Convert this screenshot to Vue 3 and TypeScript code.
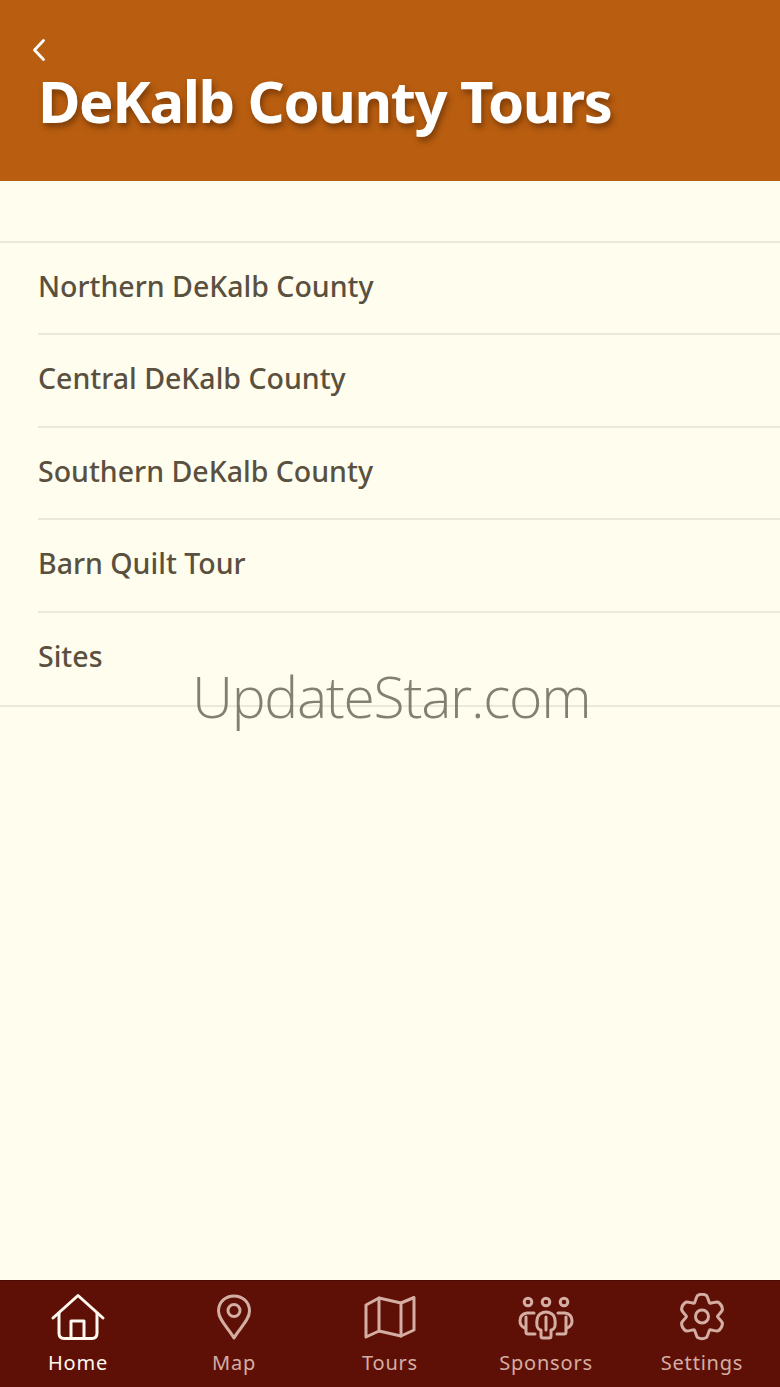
<script setup lang="ts">
interface Tab {
  label: string
  active?: boolean
}

const items = [
  'Northern DeKalb County',
  'Central DeKalb County',
  'Southern DeKalb County',
  'Barn Quilt Tour',
  'Sites'
]

const tabs: Tab[] = [
  { label: 'Home', active: true },
  { label: 'Map' },
  { label: 'Tours' },
  { label: 'Sponsors' },
  { label: 'Settings' }
]

// six rounded lobes round the centre of the settings icon
function gearPoint(deg: number, r: number) {
  const a = (deg * Math.PI) / 180
  return `${(28 + r * Math.cos(a)).toFixed(2)} ${(23.5 + r * Math.sin(a)).toFixed(2)}`
}

const gearPath = (() => {
  let d = `M${gearPoint(-120, 15.5)}`
  for (let i = 0; i < 6; i++) {
    const a = -90 + i * 60
    d += ` C${gearPoint(a - 24, 16)} ${gearPoint(a - 18, 20)} ${gearPoint(a - 12, 21.5)}`
    d += ` Q${gearPoint(a, 23.5)} ${gearPoint(a + 12, 21.5)}`
    d += ` C${gearPoint(a + 18, 20)} ${gearPoint(a + 24, 16)} ${gearPoint(a + 30, 15.5)}`
  }
  return d + ' Z'
})()
</script>

<template>
  <div class="screen">
    <header class="header">
      <svg class="back" width="16" height="24" viewBox="0 0 16 24" fill="none">
        <path d="M12.5 2.5 L3.500 12 L12.5 21.5" stroke="#fff" stroke-width="2.8" stroke-linecap="round" stroke-linejoin="round" />
      </svg>
      <h1 class="title">DeKalb County Tours</h1>
    </header>

    <main class="content">
      <ul class="list">
        <li v-for="item in items" :key="item" class="row">
          <span class="row-text">{{ item }}</span>
        </li>
      </ul>
      <div class="watermark">UpdateStar.com</div>
    </main>

    <nav class="tabbar">
      <div v-for="tab in tabs" :key="tab.label" class="tab" :class="{ active: tab.active }">
        <svg class="tab-icon" width="56" height="52" viewBox="0 0 56 52" fill="none" stroke="currentColor" stroke-width="3" stroke-linecap="round" stroke-linejoin="round">
          <template v-if="tab.label === 'Home'">
            <path d="M3 25 L28 2.500 L53 25" />
            <path d="M9 20 V40 Q9 45.500 14 45.500 H42 Q47 45.500 47 40 V20" />
            <path d="M21 45.500 V28 H34 V45.500" />
          </template>
          <template v-else-if="tab.label === 'Map'">
            <path d="M28 45 C23 36 12.500 27 12.500 18 C12.500 8.500 20 3 28 3 C36 3 43.500 8.500 43.500 18 C43.500 27 33 36 28 45 Z" />
            <circle cx="28" cy="17.500" r="6" />
          </template>
          <template v-else-if="tab.label === 'Tours'">
            <path d="M4 12 L17 5 L39 10 L52 4.500 V37 L39 43 L17 38 L4 44 Z" />
            <path d="M17 5 V38" />
            <path d="M39 10 V43" />
          </template>
          <template v-else-if="tab.label === 'Sponsors'">
            <circle cx="10" cy="9" r="3.800" />
            <circle cx="28" cy="9" r="3.800" />
            <circle cx="46" cy="9" r="3.800" />
            <path d="M22 21 Q28 17 34 21 Q38 24 37 33 Q36 37 33 37 V43 Q33 45 31 45 H25 Q23 45 23 43 V37 Q20 37 19 33 Q18 24 22 21 Z" />
            <path d="M28 24 V37" />
            <path d="M16 20 H9 Q2 21 2 28 Q2 33 7 35" />
            <path d="M8 24 V39 Q8 41 10 41 H17" />
            <path d="M40 20 H47 Q54 21 54 28 Q54 33 49 35" />
            <path d="M48 24 V39 Q48 41 46 41 H39" />
          </template>
          <template v-else>
            <path :d="gearPath" />
            <circle cx="28" cy="23.500" r="6.500" />
          </template>
        </svg>
        <span class="tab-label">{{ tab.label }}</span>
      </div>
    </nav>
  </div>
</template>

<style scoped>
.screen {
  width: 780px;
  height: 1387px;
  display: flex;
  flex-direction: column;
  background: #fffdee;
  font-family: "Noto Sans", "Open Sans", sans-serif;
  overflow: hidden;
}
.header {
  height: 181px;
  box-sizing: border-box;
  padding: 38px 0 0 31px;
  background: #b95e10;
  flex-shrink: 0;
}
.back {
  display: block;
}
.title {
  margin: 9px 0 0 7px;
  color: #fff;
  font-size: 58px;
  line-height: 60px;
  font-weight: 700;
  letter-spacing: -1.4px;
  white-space: nowrap;
  text-shadow: 2px 4px 6px rgba(70, 30, 0, 0.55);
}
.content {
  flex: 1;
  position: relative;
  padding-top: 60px;
}
.list {
  list-style: none;
  margin: 0;
  padding: 0;
  border-top: 2px solid #ebe9dc;
  border-bottom: 2px solid #ebe9dc;
}
.row {
  padding-left: 38px;
}
.row-text {
  display: block;
  height: 92.4px;
  box-sizing: border-box;
  padding-top: 23px;
  border-bottom: 2px solid #ebe9dc;
  color: #5a5040;
  font-size: 28.5px;
  line-height: 40px;
  font-weight: 500;
  white-space: nowrap;
}
.row:last-child .row-text {
  border-bottom: none;
}
.watermark {
  position: absolute;
  left: 192px;
  top: 477px;
  color: rgba(80, 80, 65, 0.72);
  font-family: "Open Sans", sans-serif;
  font-weight: 300;
  font-size: 57px;
  line-height: 76px;
  letter-spacing: -1.3px;
  white-space: nowrap;
}
.tabbar {
  height: 107px;
  flex-shrink: 0;
  display: grid;
  grid-template-columns: repeat(5, 1fr);
  background: #5f1006;
  box-sizing: border-box;
  border-top: 1px solid #4a0c04;
}
.tab {
  display: flex;
  flex-direction: column;
  align-items: center;
  padding-top: 12px;
  color: #d4aea3;
}
.tab.active {
  color: #fff8ee;
}
.tab-icon {
  display: block;
}
.tab-label {
  margin-top: 4px;
  font-size: 20px;
  line-height: 28px;
  letter-spacing: 0.8px;
  white-space: nowrap;
}
</style>
